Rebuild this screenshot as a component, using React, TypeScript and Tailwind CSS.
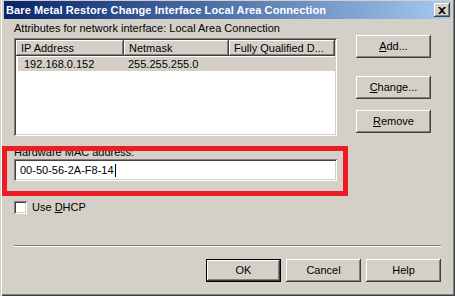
import React from "react";

const raised =
  "shadow-[inset_-1px_-1px_#404040,inset_1px_1px_#ffffff,inset_-2px_-2px_#808080,inset_2px_2px_#d4d0c8]";
const sunken =
  "shadow-[inset_1px_1px_#808080,inset_-1px_-1px_#ffffff,inset_2px_2px_#404040,inset_-2px_-2px_#d4d0c8]";

const Button = ({ children, isDefault }: { children: React.ReactNode; isDefault?: boolean }) => {
  if (isDefault) {
    return (
      <div className="w-[75px] h-[23px] border border-black">
        <div className={`w-full h-full flex items-center justify-center bg-[#d4d0c8] ${raised}`}>{children}</div>
      </div>
    );
  }
  return (
    <div className={`w-[75px] h-[23px] flex items-center justify-center bg-[#d4d0c8] ${raised}`}>{children}</div>
  );
};

const HeaderCell = ({ label, width }: { label: string; width: string }) => (
  <div className={`${width} h-[16px] flex items-center pl-[5px] bg-[#d4d0c8] shadow-[inset_-1px_-1px_#404040,inset_1px_1px_#ffffff,inset_-2px_-2px_#808080]`}>
    {label}
  </div>
);

const App = () => {
  return (
    <div className="relative w-[455px] h-[296px] bg-[#d4d0c8] pt-[1px] px-[4px] text-[11px] leading-[13px] text-black font-['Liberation_Sans',Arial,sans-serif] shadow-[inset_1px_0_#d4d0c8,inset_2px_0_#ffffff,inset_-1px_-1px_#404040,inset_-2px_-2px_#808080]">
      {/* title bar */}
      <div className="h-[18px] flex items-center justify-between pl-[2px] pr-[1px] bg-gradient-to-r from-[#0a246a] to-[#a6caf0]">
        <span className="font-bold text-white tracking-[0.1px]">Bare Metal Restore Change Interface Local Area Connection</span>
        <div className={`w-[16px] h-[14px] flex items-center justify-center bg-[#d4d0c8] ${raised}`}>
          <svg width="8" height="7" viewBox="0 0 8 7">
            <path d="M0 0h2l2 2 2-2h2L5 3.5 8 7H6L4 5 2 7H0l3-3.5z" fill="#000" />
          </svg>
        </div>
      </div>

      <div className="px-[10px]">
        <div className="flex">
          <div className="w-[323px] flex flex-col">
            <div className="mt-[3px] h-[13px]">Attributes for network interface: Local Area Connection</div>
            <div className={`mt-[3px] h-[98px] p-[2px] bg-white ${sunken}`}>
              <div className="flex">
                <HeaderCell label="IP Address" width="w-[108px]" />
                <HeaderCell label="Netmask" width="w-[105px]" />
                <HeaderCell label="Fully Qualified D..." width="w-[106px]" />
              </div>
              <div className="ml-[2px] mt-[1px] h-[14px] flex items-center bg-[#d4d0c8]">
                <span className="w-[106px] pl-[6px]">192.168.0.152</span>
                <span className="pl-[4px]">255.255.255.0</span>
              </div>
            </div>

            <div className="mt-[10px] h-[13px]">Hardware MAC address:</div>
            <div className={`h-[22px] flex items-center pl-[6px] bg-white ${sunken}`}>
              <span>00-50-56-2A-F8-14</span>
              <span className="ml-[1px] w-[1px] h-[13px] bg-black" />
            </div>

            <div className="mt-[20px] flex items-center">
              <div className={`w-[13px] h-[13px] bg-white ${sunken}`} />
              <span className="ml-[5px]">
                Use <span className="underline">D</span>HCP
              </span>
            </div>
          </div>

          <div className="ml-[19px] pt-[16px] flex flex-col">
            <Button>
              <span className="underline">A</span>dd...
            </Button>
            <div className="mt-[18px]">
              <Button>
                <span className="underline">C</span>hange...
              </Button>
            </div>
            <div className="mt-[11px]">
              <Button>
                <span className="underline">R</span>emove
              </Button>
            </div>
          </div>
        </div>

        <div className="mt-[31px] h-[2px] border-t border-t-[#808080] border-b border-b-white" />

        <div className="mt-[12px] flex justify-end gap-[5px]">
          <Button isDefault>OK</Button>
          <Button>Cancel</Button>
          <Button>Help</Button>
        </div>
      </div>

      {/* annotation highlight */}
      <div className="absolute left-[2px] top-[146px] w-[346px] h-[50px] border-[5px] border-[#ed1c24]" />
    </div>
  );
};

export default App;
